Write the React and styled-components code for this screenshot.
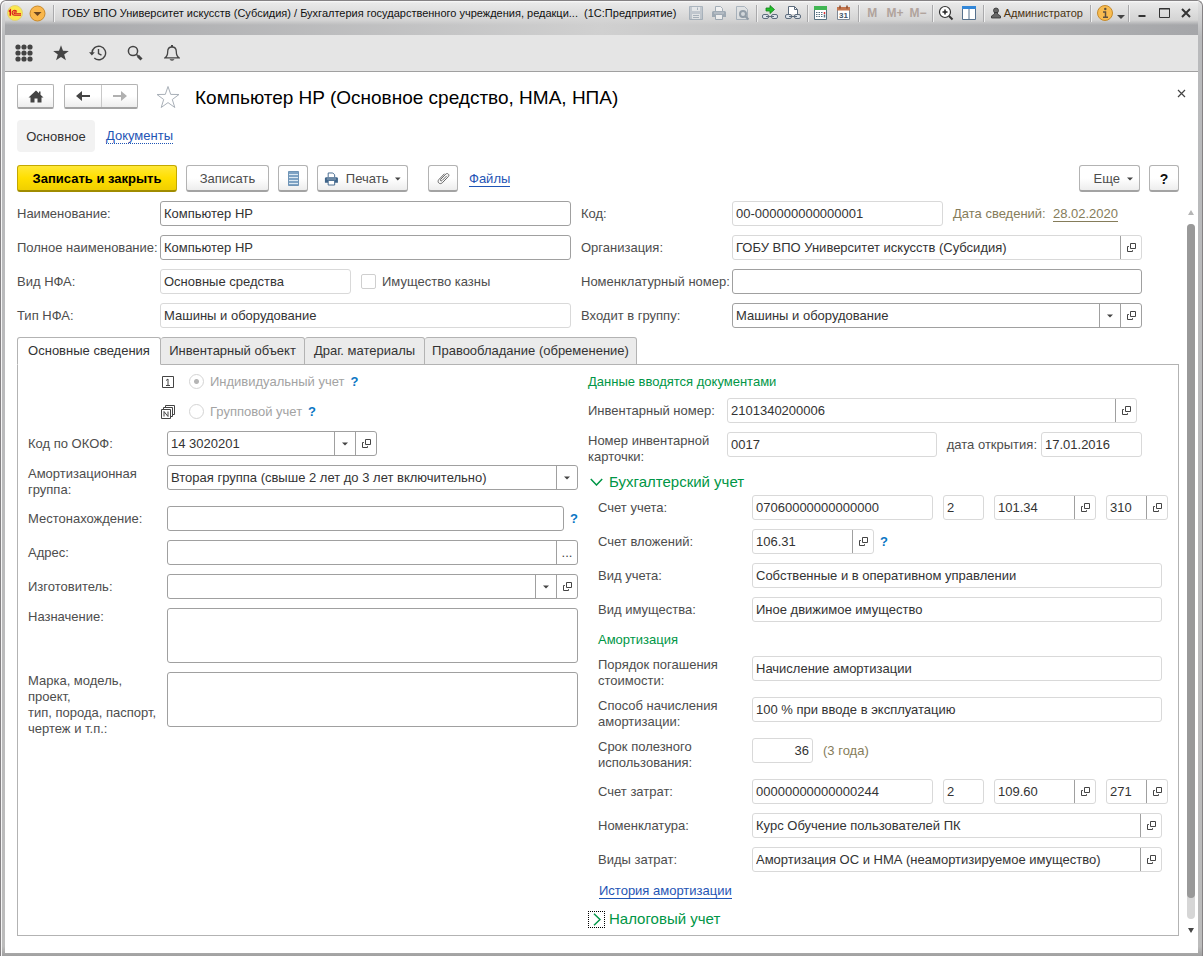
import React from "react";
import styled, { createGlobalStyle, css } from "styled-components";

const colors = {
    text: "#333333",
    label: "#4d4d4d",
    border: "#a0a0a0",
    borderSoft: "#d9d9d9",
    green: "#009646",
    link: "#1f55b5",
    help: "#0a76c4",
    muted: "#857c5a",
}

const GlobalStyle = createGlobalStyle`
*, *::before, *::after { box-sizing: border-box; }
body {
margin: 0;
background: #ffffff;
}
body, input, select, textarea, button {
font-family: "Liberation Sans", Arial, sans-serif;
font-size: 13px;
line-height: 16px;
color: ${colors.text};
}
button {
padding: 0;
border: none;
background: none;
}
svg { display: block; }
`

/* window */

const Window = styled.div`
min-height: 100vh;
display: flex;
flex-direction: column;
padding: 0 4px 3px;
border: solid #858284;
border-width: 1px 1px 0;
border-radius: 6px 6px 0 0;
background: linear-gradient(to bottom, #e2e2e2, #b9babc 36px, #bcbcbc 99%, #a0a0a0 100%);
box-shadow: inset 1px 1px 0 #f4f4f4;
`

const TitleBar = styled.header`
height: 34px;
padding: 0 1px 10px 1px;
display: flex;
align-items: center;
background:
linear-gradient(to bottom, #fafafa, #e9e9e9 2px, #d4d4d4 19px, transparent 24px),
linear-gradient(to right, #a5a6a9, #d0d0d0 50%, #a5a6a9);
`

const WindowTitle = styled.h1`
flex: 1 1 0;
min-width: 0;
margin: 0;
padding-left: 6px;
overflow: hidden;
white-space: pre;
font-size: 11px;
font-weight: normal;
color: #111111;
`

const Separator = styled.span`
flex: none;
width: 1px;
height: 17px;
margin: 0 2px;
background: #a9a9ab;
box-shadow: 1px 0 0 #f0f0f0;
`

const TitleButton = styled.button`
flex: none;
width: ${(p) => p.$width || 23}px;
height: 22px;
display: flex;
align-items: center;
justify-content: center;
gap: 3px;
opacity: ${(p) => (p.disabled ? 0.55 : 1)};
`

const MemoryButton = styled(TitleButton)`
font-size: 12px;
font-weight: bold;
color: #8d7468;
`

const UserButton = styled(TitleButton)`
width: auto;
padding: 0 5px;
font-size: 11px;
color: #4a3412;
white-space: nowrap;
`

const SectionBar = styled.nav`
height: 37px;
display: flex;
align-items: center;
background: #e5e5e5;
border-bottom: 1px solid #a0a0a0;
`

const SectionButton = styled.button`
width: 37px;
height: 36px;
display: flex;
align-items: center;
justify-content: center;
color: #444444;
`

const Page = styled.main`
flex: 1;
padding: 12px 3px 17px 12px;
background: #ffffff;
`

/* page head */

const PageHead = styled.div`
height: 25px;
padding-right: 5px;
display: flex;
align-items: center;
`

const raised = css`
border: 1px solid #b3b3b3;
border-bottom: 2px solid #a3a3a3;
border-radius: 3px;
background: linear-gradient(to bottom, #ffffff 50%, #ededed);
`

const NavGroup = styled.div`
height: 25px;
display: flex;
margin-right: 10px;
${raised}
border-radius: 2px;
`

const NavButton = styled.button`
width: ${(p) => p.$width || 36}px;
display: flex;
align-items: center;
justify-content: center;
color: #444444;
& + & {
border-left: 1px solid #c8c8c8;
}
`

const StarButton = styled.button`
width: 24px;
margin: 0 15px 0 8px;
`

const PageTitle = styled.h2`
flex: 1;
margin: 0;
padding-top: 2px;
font-size: 19px;
line-height: 25px;
font-weight: normal;
color: #000000;
white-space: nowrap;
`

const CloseButton = styled.button`
width: 18px;
height: 18px;
display: flex;
align-items: center;
justify-content: center;
align-self: flex-start;
`

const PageNav = styled.nav`
margin-top: 11px;
display: flex;
align-items: center;
gap: 11px;
`

const CurrentPage = styled.span`
width: 78px;
height: 32px;
line-height: 34px;
text-align: center;
border-radius: 4px;
background: #f2f2f2;
`

const Link = styled.a`
color: ${(p) => p.$color || colors.link};
text-decoration: none;
line-height: 15px;
border-bottom: 1px ${(p) => (p.$dotted ? "dotted" : "solid")} currentColor;
`

const CommandBar = styled.div`
margin-top: 13px;
padding-right: 16px;
height: 27px;
display: flex;
align-items: center;
gap: 9px;
`

const Command = styled.button`
height: 27px;
width: ${(p) => p.$width}px;
padding: 1px ${(p) => (p.$menu ? 6 : 0)}px 0;
display: flex;
align-items: center;
justify-content: ${(p) => (p.$menu ? "flex-end" : "center")};
gap: 7px;
color: #4d4d4d;
${raised}
${(p) => p.$primary && css`
color: #000000;
font-weight: bold;
border-color: #c3a800;
border-bottom-color: #a08c00;
background: linear-gradient(to bottom, #ffe838, #ffdf00 50%, #f0cf00);
`}
`

const HelpCommand = styled(Command)`
color: #111111;
font-weight: bold;
font-size: 14px;
`

const Attachments = styled.div`
display: flex;
align-items: center;
gap: 11px;
margin-left: 11px;
`

const Spacer = styled.span`
flex: 1;
`

/* form */

const FormArea = styled.div`
margin-top: 9px;
display: flex;
gap: 8px;
`

const Form = styled.form`
flex: 1;
min-width: 0;
`

const HeadGrid = styled.div`
display: grid;
grid-template-columns: minmax(0, 554fr) minmax(0, 561fr);
column-gap: 10px;
padding-right: 37px;
`

const Stack = styled.div`
display: flex;
flex-direction: column;
gap: 9px;
padding-left: ${(p) => p.$indent || 0}px;
`

const Row = styled.div`
display: flex;
align-items: flex-start;
gap: 10px;
padding-right: ${(p) => p.$end || 0}px;
`

const Label = styled.label`
flex: none;
width: ${(p) => p.$width}px;
margin-right: -10px;
color: ${colors.label};
white-space: nowrap;
${(p) => p.$top ? css`
padding-top: 1px;
margin-bottom: -1px;
` : css`
line-height: 25px;
`}
`

const Note = styled.span`
line-height: 25px;
white-space: nowrap;
color: ${(p) => p.$color || colors.label};
`

const NoteLabel = styled(Note).attrs({ as: "label" })`
margin-right: -6px;
`

const Box = styled.div`
height: 25px;
min-width: 0;
display: flex;
flex: ${(p) => (p.$width ? `0 1 ${p.$width}px` : "1 1 0")};
border: 1px solid ${(p) => (p.$soft ? colors.borderSoft : colors.border)};
border-radius: 3px;
background: #ffffff;
`

const control = css`
flex: 1;
width: 100%;
min-width: 0;
height: 23px;
padding: 0 3px;
border: none;
outline: none;
background: transparent;
`

const Input = styled.input`
${control}
text-align: ${(p) => p.$align || "left"};
`

const Select = styled.select`
${control}
appearance: none;
margin-right: -21px;
padding-right: 24px;
`

const SideButton = styled.button`
flex: none;
width: 21px;
display: flex;
align-items: center;
justify-content: center;
border-left: 1px solid ${colors.border};
color: #444444;
`

const Arrow = styled(SideButton).attrs({ as: "span" })`
pointer-events: none;
`

const TextArea = styled.textarea`
flex: 1;
min-width: 0;
height: 55px;
padding: 3px;
border: 1px solid ${colors.border};
border-radius: 3px;
resize: none;
outline: none;
`

const CheckLabel = styled.label`
height: 25px;
display: flex;
align-items: center;
gap: 6px;
color: ${colors.label};
white-space: nowrap;
`

const Check = styled.input`
appearance: none;
width: 15px;
height: 15px;
margin: 0;
border: 1px solid #cfcfcf;
border-radius: 2px;
background: #ffffff;
`

const RadioRow = styled.div`
height: 21px;
padding-left: 133px;
display: flex;
align-items: center;
gap: 6px;
`

const RadioLabel = styled.label`
display: flex;
align-items: center;
gap: 6px;
margin-left: 8px;
color: #a3a3a3;
white-space: nowrap;
`

const Radio = styled.input`
appearance: none;
width: 15px;
height: 15px;
margin: 0;
border: 1px solid #d4d4d4;
border-radius: 50%;
&:checked {
background: radial-gradient(circle, #b5b5b5 0 2px, transparent 3px);
}
`

const Help = styled.button`
width: 8px;
line-height: 16px;
font-weight: bold;
color: ${colors.help};
`

const FieldHelp = styled(Help)`
margin-left: -4px;
line-height: 25px;
`

/* tabs */

const Tabs = styled.div`
position: relative;
margin-top: 9px;
display: flex;
`

const Tab = styled.button`
width: ${(p) => p.$width}px;
height: 28px;
text-align: center;
white-space: nowrap;
border: 1px solid #b3b3b3;
border-radius: 3px 3px 0 0;
background: #ebebeb;
& + & {
border-left: none;
}
${(p) => p["aria-selected"] && css`
background: #ffffff;
border-bottom-color: #ffffff;
`}
`

const Panel = styled.section`
margin-top: -1px;
padding: 6px 10px 3px;
display: grid;
grid-template-columns: minmax(0, 55fr) minmax(0, 58fr);
column-gap: 10px;
border: 1px solid #b3b3b3;
`

const Documents = styled.div`
padding-top: 2px;
`

const SubTitle = styled.h3`
margin: 0;
height: 16px;
font-size: 13px;
line-height: 18px;
font-weight: normal;
color: ${colors.green};
`

const GroupTitle = styled.h3`
margin: 0;
height: 31px;
padding-top: 5px;
display: flex;
align-items: center;
gap: 4px;
font-size: 15px;
font-weight: normal;
color: ${colors.green};
`

const Toggle = styled.button`
width: 17px;
height: 17px;
display: flex;
align-items: center;
justify-content: center;
border: 1px ${(p) => (p.$focused ? "dotted #000000" : "solid transparent")};
`

const HistoryRow = styled.div`
height: 20px;
padding: 2px 0 0 1px;
`

const ScrollBar = styled.div`
width: 8px;
display: flex;
flex-direction: column;
align-items: center;
gap: 9px;
padding: 9px 0 3px;
`

const Track = styled.div`
flex: 1;
width: 8px;
border-radius: 4px;
background: #d6d6d6;
`

const Thumb = styled.div`
height: 97%;
border-radius: 4px;
background: #999999;
`

/* icons */

const Svg = ({ size = 16, w, h, children }) => (
    <svg width={w || size} height={h || size} viewBox={`0 0 ${w || size} ${h || size}`} fill="none" aria-hidden="true">
        {children}
    </svg>
)

const Caret = () => <Svg w={6} h={4}><path d="M0 0.5h6L3 3.5z" fill="#444" /></Svg>

const OpenIcon = () => (
    <Svg w={9} h={9}>
        <path d="M3.5 0.5h5v5h-5z M1.9 3.5H0.5v5h5V7.2" stroke="#444" />
    </Svg>
)

const LogoIcon = () => (
    <Svg size={16}>
        <circle cx="8" cy="8" r="7.5" fill="#fbe84c" stroke="#e0cf7a" />
        <path d="M1.8 6.5L3.3 5.2V10.8" stroke="#d8141c" strokeWidth="1.5" />
        <path d="M9.8 6.6A2.5 2.5 0 1 0 7.6 10.3H14M9 7.9A1 1 0 1 0 8 8.7h6" stroke="#d8141c" strokeWidth="1.1" />
    </Svg>
)

const MenuIcon = () => (
    <Svg size={17}>
        <circle cx="8.5" cy="8.5" r="7.5" fill="#f9b74c" stroke="#c98a2a" />
        <path d="M4.5 7h8l-4 4z" fill="#6a4520" />
    </Svg>
)

const SaveIcon = () => (
    <Svg>
        <path d="M1.5 1.5h13v13h-13z" fill="#a9b5c1" stroke="#7d8fa0" />
        <path d="M4 2h8v4H4zM4 9h8v5H4z" fill="#e8ecef" />
        <path d="M9.5 2.5v2.5M5 10.5h6M5 12.5h6" stroke="#7d8fa0" />
    </Svg>
)

const PrintIcon = ({ color = "#6f8294" }) => (
    <Svg>
        <path d="M4.5 6V1.5h5l2 2V6" fill="#fff" stroke={color} />
        <path d="M2 6h12l1 1v5H1V7z" fill={color} />
        <path d="M4.5 9.5h7v5h-7z" fill="#fff" stroke={color} />
        <path d="M3 8h10" stroke="#fff" strokeOpacity="0.5" />
    </Svg>
)

const PreviewIcon = () => (
    <Svg>
        <path d="M2.5 14.5v-13h8l3 3v10z" fill="#dfe3e6" stroke="#7d8fa0" />
        <circle cx="9" cy="9" r="3" fill="#cdd5dc" stroke="#566a7c" strokeWidth="2" />
        <path d="M11 11l3.5 3.5" stroke="#566a7c" strokeWidth="2" />
    </Svg>
)

const chain = (
    <>
        <rect x="0.5" y="9.5" width="6" height="4" rx="1.5" fill="#dde3ea" stroke="#5c6b7c" />
        <rect x="9.5" y="9.5" width="6" height="4" rx="1.5" fill="#dde3ea" stroke="#5c6b7c" />
        <path d="M4 11.5h8" stroke="#5c6b7c" />
    </>
)

const LinkArrowIcon = () => (
    <Svg>
        {chain}
        <path d="M4 3h4V0.5l4.500 4L8 8.500V6H4z" fill="#22c02a" stroke="#12801a" strokeWidth="0.8" />
    </Svg>
)

const LinkPageIcon = () => (
    <Svg>
        <path d="M3.5 9V1.5h6l3 3V9" fill="#fff" stroke="#5c6b7c" />
        <path d="M9.5 1.5v3h3" stroke="#5c6b7c" />
        {chain}
    </Svg>
)

const CalculatorIcon = () => (
    <Svg>
        <path d="M1.5 1.5h12v13h-12z" fill="#fff" stroke="#55707f" />
        <path d="M1 1h13v4H1z" fill="#41b653" />
        <path d="M3 7.5h7M3 9.5h7M3 11.5h7" stroke="#55707f" strokeDasharray="1.5 1" />
        <path d="M11.5 7v2" stroke="#d33" strokeWidth="1.5" />
        <path d="M11.5 9.5v3" stroke="#55707f" strokeWidth="1.5" />
    </Svg>
)

const CalendarIcon = () => (
    <Svg>
        <path d="M1.5 2.5h12v12h-12z" fill="#fff" stroke="#7d8895" />
        <path d="M1 2h13v3.500H1z" fill="#c4764e" />
        <path d="M4 0.5v3M11 0.5v3" stroke="#8a4a2a" strokeWidth="1.5" />
        <text x="7.5" y="12.8" fontSize="8" fontWeight="bold" textAnchor="middle" fill="#3f5468" fontFamily="Liberation Sans">31</text>
    </Svg>
)

const ZoomIcon = () => (
    <Svg>
        <circle cx="7" cy="7" r="5.5" fill="#fff" stroke="#333" strokeWidth="1.2" />
        <path d="M4.5 7h5M7 4.5v5" stroke="#222" strokeWidth="1.5" />
        <path d="M11 11l3.5 3.5" stroke="#333" strokeWidth="2" />
    </Svg>
)

const PanelsIcon = () => (
    <Svg>
        <path d="M1.5 1.5h13v13h-13z" fill="#fff" stroke="#55708c" />
        <path d="M1 1h14v3H1z" fill="#3287d8" />
        <path d="M8 4v10" stroke="#55708c" />
    </Svg>
)

const UserIcon = () => (
    <Svg w={10} h={12}>
        <circle cx="5" cy="3.5" r="2.5" fill="#666" stroke="#333" strokeWidth="0.8" />
        <path d="M0.5 11V9l3-2V5.5h3V7l3 2v2z" fill="#666" stroke="#333" strokeWidth="0.8" />
    </Svg>
)

const InfoIcon = () => (
    <Svg>
        <circle cx="8" cy="8" r="7.5" fill="#f8bc50" stroke="#c58a2c" />
        <path d="M6 7h2.500v5M6 12.300h5" stroke="#5c5040" strokeWidth="1.5" />
        <circle cx="8.3" cy="4" r="1.2" fill="#5c5040" />
    </Svg>
)

const AppsIcon = () => (
    <Svg size={18}>
        {[3, 9, 15].map((y) => [3, 9, 15].map((x) => <circle key={`${x}-${y}`} cx={x} cy={y} r="2.6" fill="#444" />))}
    </Svg>
)

const FavIcon = () => (
    <Svg size={16}>
        <path d="M8 0.300l2 5.500 5.800.2-4.600 3.500 1.700 5.700L8 11.900l-4.900 3.300 1.700-5.700L.2 6l5.800-.2z" fill="#444" />
    </Svg>
)

const HistoryIcon = () => (
    <Svg size={18}>
        <path d="M3 9a6.800 6.800 0 1 1 2.300 5.100" stroke="#444" strokeWidth="1.4" />
        <path d="M0 8.200h5.800L2.900 11.500z" fill="#444" />
        <path d="M9.500 5v4.500l3 1.700" stroke="#444" strokeWidth="1.4" />
    </Svg>
)

const SearchIcon = () => (
    <Svg size={16}>
        <circle cx="6" cy="6" r="4.6" stroke="#444" strokeWidth="1.5" />
        <path d="M9.300 9.300l1.500 1.500" stroke="#444" strokeWidth="1.5" />
        <path d="M10.800 10.800l3.700 3.700" stroke="#444" strokeWidth="3" />
    </Svg>
)

const BellIcon = () => (
    <Svg w={16} h={18}>
        <path d="M1 13.800c2.200-1.300 2.700-3.200 2.700-6.300C3.700 4.800 5.500 3 8 3s4.300 1.800 4.300 4.500c0 3.100.5 5 2.700 6.300z" stroke="#444" strokeWidth="1.3" />
        <path d="M8 1v2" stroke="#444" strokeWidth="2" />
        <path d="M5.500 15.200h5a2.600 2 0 0 1-5 0z" fill="#444" />
    </Svg>
)

const HomeIcon = () => (
    <Svg w={16} h={13}>
        <path d="M8 0.500L0.500 7.500H2.500V12.500H6.500V8.500H9.500V12.500H13.500V7.500H15.500L12.500 4.700V1.500H11V3.300z" fill="#444" />
    </Svg>
)

const BackIcon = () => (
    <Svg w={14} h={10}>
        <path d="M0 5L6 0V4H14V6H6V10z" fill="#444" />
    </Svg>
)

const ForwardIcon = () => (
    <Svg w={14} h={10}>
        <path d="M14 5L8 0V4H0V6H8V10z" fill="#b0b0b0" />
    </Svg>
)

const StarIcon = () => (
    <Svg size={24}>
        <path d="M12 1.500l2.700 7.900 8.300.1-6.700 5 2.500 8L12 17.600l-6.800 4.900 2.500-8-6.700-5 8.300-.1z" stroke="#a9b0b8" />
    </Svg>
)

const ListIcon = () => (
    <Svg w={11} h={15}>
        <path d="M0.500 0.500h10v14h-10z" fill="#7fa3c4" stroke="#6f94b6" />
        <path d="M1 3.500h9M1 6.500h9M1 9.500h9M1 12.500h9" stroke="#dbe8f2" />
    </Svg>
)

const ClipIcon = () => (
    <Svg size={15}>
        <path d="M10.800 4.800L6 9.600c-1 1-2.300-.3-1.300-1.300l5.100-5.200c1.700-1.600 4.200.7 2.500 2.500L6.300 11.800c-2.500 2.300-5.700-.7-3.400-3.300L8.500 2.700" stroke="#666" />
    </Svg>
)

const SingleIcon = () => (
    <Svg size={14}>
        <path d="M1.500 1.500h11v11h-11z M5 5.500l2-1.500v6.500 M5 10.500h4" stroke="#444" />
    </Svg>
)

const ManyIcon = () => (
    <Svg size={14}>
        <path d="M0.500 4.500h9v9h-9z M2.500 4V2.500h9V11.500H10 M4.500 2V0.500h9V9.500H12" stroke="#444" />
        <path d="M3 11.500V6.500L7 11.500V6.500" stroke="#444" />
    </Svg>
)

/* form parts */

const Field = ({ id, value = "", width, soft, align, name, dots, open, type = "text" }) => (
    <Box $width={width} $soft={soft}>
        <Input id={id} type={type} defaultValue={value} readOnly={soft} $align={align} aria-label={name} />
        {dots && <SideButton type="button" aria-label="Выбрать">...</SideButton>}
        {open && <SideButton type="button" aria-label="Открыть"><OpenIcon /></SideButton>}
    </Box>
)

const Combo = ({ id, value = "", width, open }) => (
    <Box $width={width}>
        <Select id={id} defaultValue={value}>
            <option value={value}>{value}</option>
        </Select>
        <Arrow><Caret /></Arrow>
        {open && <SideButton type="button" aria-label="Открыть"><OpenIcon /></SideButton>}
    </Box>
)

const AccountRow = ({ id, label, values }) => (
    <Row>
        <Label htmlFor={id} $width={154}>{label}</Label>
        <Field id={id} soft value={values[0]} />
        <Field soft width={41} value={values[1]} name="КФО" />
        <Field soft width={102} value={values[2]} name="Счет" open />
        <Field soft width={62} value={values[3]} name="КЭК" open />
    </Row>
)

const tabs = [
    { title: "Основные сведения", width: 144 },
    { title: "Инвентарный объект", width: 144 },
    { title: "Драг. материалы", width: 120 },
    { title: "Правообладание (обременение)", width: 212 },
]

const sections = [
    { title: "Меню функций", icon: <AppsIcon /> },
    { title: "Избранное", icon: <FavIcon /> },
    { title: "История", icon: <HistoryIcon /> },
    { title: "Поиск", icon: <SearchIcon /> },
    { title: "Оповещения", icon: <BellIcon /> },
]

function AppTitle() {
    return (
        <TitleBar>
            <TitleButton $width={18} aria-label="1С"><LogoIcon /></TitleButton>
            <TitleButton $width={27} aria-label="Главное меню"><MenuIcon /></TitleButton>
            <Separator />
            <WindowTitle>{"ГОБУ ВПО Университет искусств (Субсидия) / Бухгалтерия государственного учреждения, редакци...  (1С:Предприятие)"}</WindowTitle>
            <TitleButton disabled aria-label="Сохранить"><SaveIcon /></TitleButton>
            <TitleButton disabled aria-label="Печать"><PrintIcon /></TitleButton>
            <TitleButton disabled aria-label="Просмотр"><PreviewIcon /></TitleButton>
            <Separator />
            <TitleButton aria-label="Получить ссылку"><LinkArrowIcon /></TitleButton>
            <TitleButton aria-label="Перейти по ссылке"><LinkPageIcon /></TitleButton>
            <Separator />
            <TitleButton aria-label="Калькулятор"><CalculatorIcon /></TitleButton>
            <TitleButton aria-label="Календарь"><CalendarIcon /></TitleButton>
            <Separator />
            <MemoryButton disabled>M</MemoryButton>
            <MemoryButton disabled>M+</MemoryButton>
            <MemoryButton disabled>M−</MemoryButton>
            <Separator />
            <TitleButton aria-label="Масштаб"><ZoomIcon /></TitleButton>
            <TitleButton aria-label="Панели"><PanelsIcon /></TitleButton>
            <Separator />
            <UserButton><UserIcon />Администратор</UserButton>
            <Separator />
            <TitleButton aria-label="Справка"><InfoIcon /></TitleButton>
            <TitleButton $width={10} aria-label="Еще">
                <Svg w={8} h={12}><path d="M0 8h8l-4 4z" fill="#444" /></Svg>
            </TitleButton>
            <Separator />
            <TitleButton $width={22} aria-label="Свернуть">
                <Svg w={8} h={8}><path d="M0.500 7h7" stroke="#333" strokeWidth="2" /></Svg>
            </TitleButton>
            <TitleButton $width={22} aria-label="Развернуть">
                <Svg w={11} h={10}><path d="M0.500 0.500h10v9h-10z M0 1h11" stroke="#333" /></Svg>
            </TitleButton>
            <TitleButton $width={22} aria-label="Закрыть окно">
                <Svg size={10}><path d="M1 1l8 8M9 1L1 9" stroke="#333" strokeWidth="2" /></Svg>
            </TitleButton>
        </TitleBar>
    )
}

function HeadFields() {
    return (
        <HeadGrid>
            <Stack>
                <Row>
                    <Label htmlFor="name" $width={143}>Наименование:</Label>
                    <Field id="name" value="Компьютер HP" />
                </Row>
                <Row>
                    <Label htmlFor="fullName" $width={143}>Полное наименование:</Label>
                    <Field id="fullName" value="Компьютер HP" />
                </Row>
                <Row>
                    <Label htmlFor="assetKind" $width={143}>Вид НФА:</Label>
                    <Field id="assetKind" soft width={191} value="Основные средства" />
                    <CheckLabel><Check type="checkbox" />Имущество казны</CheckLabel>
                </Row>
                <Row>
                    <Label htmlFor="assetType" $width={143}>Тип НФА:</Label>
                    <Field id="assetType" soft value="Машины и оборудование" />
                </Row>
            </Stack>
            <Stack>
                <Row>
                    <Label htmlFor="code" $width={151}>Код:</Label>
                    <Field id="code" soft width={211} value="00-000000000000001" />
                    <Note $color={colors.muted}>Дата сведений:&nbsp; <Link href="#date" $color={colors.muted}>28.02.2020</Link></Note>
                </Row>
                <Row>
                    <Label htmlFor="company" $width={151}>Организация:</Label>
                    <Field id="company" soft value="ГОБУ ВПО Университет искусств (Субсидия)" open />
                </Row>
                <Row>
                    <Label htmlFor="itemNumber" $width={151}>Номенклатурный номер:</Label>
                    <Field id="itemNumber" />
                </Row>
                <Row>
                    <Label htmlFor="parent" $width={151}>Входит в группу:</Label>
                    <Combo id="parent" value="Машины и оборудование" open />
                </Row>
            </Stack>
        </HeadGrid>
    )
}

function MainInfo() {
    return (
        <Stack>
            <RadioRow>
                <SingleIcon />
                <RadioLabel><Radio type="radio" name="accounting" defaultChecked disabled />Индивидуальный учет</RadioLabel>
                <Help type="button">?</Help>
            </RadioRow>
            <RadioRow>
                <ManyIcon />
                <RadioLabel><Radio type="radio" name="accounting" disabled />Групповой учет</RadioLabel>
                <Help type="button">?</Help>
            </RadioRow>
            <Row>
                <Label htmlFor="okof" $width={139}>Код по ОКОФ:</Label>
                <Combo id="okof" width={210} value="14 3020201" open />
            </Row>
            <Row>
                <Label htmlFor="group" $width={139} $top>Амортизационная<br />группа:</Label>
                <Combo id="group" value="Вторая группа (свыше 2 лет до 3 лет включительно)" />
            </Row>
            <Row>
                <Label htmlFor="location" $width={139}>Местонахождение:</Label>
                <Field id="location" />
                <FieldHelp type="button">?</FieldHelp>
            </Row>
            <Row>
                <Label htmlFor="address" $width={139}>Адрес:</Label>
                <Field id="address" dots />
            </Row>
            <Row>
                <Label htmlFor="maker" $width={139}>Изготовитель:</Label>
                <Combo id="maker" open />
            </Row>
            <Row>
                <Label htmlFor="purpose" $width={139} $top>Назначение:</Label>
                <TextArea id="purpose" />
            </Row>
            <Row>
                <Label htmlFor="model" $width={139} $top>
                    Марка, модель,<br />проект,<br />тип, порода, паспорт,<br />чертеж и т.п.:
                </Label>
                <TextArea id="model" />
            </Row>
        </Stack>
    )
}

function DocumentInfo() {
    return (
        <Documents>
            <Stack>
                <SubTitle>Данные вводятся документами</SubTitle>
                <Row $end={31}>
                    <Label htmlFor="inventory" $width={139}>Инвентарный номер:</Label>
                    <Field id="inventory" soft value="2101340200006" open />
                </Row>
                <Row $end={26}>
                    <Label htmlFor="card" $width={139} $top>Номер инвентарной<br />карточки:</Label>
                    <Field id="card" soft value="0017" />
                    <NoteLabel htmlFor="cardDate">дата открытия:</NoteLabel>
                    <Field id="cardDate" soft width={101} value="17.01.2016" />
                </Row>
            </Stack>
            <GroupTitle>
                <Toggle type="button" aria-label="Свернуть группу">
                    <Svg w={13} h={8}><path d="M0.800 1l5.700 6L12.200 1" stroke={colors.green} strokeWidth="1.5" /></Svg>
                </Toggle>
                Бухгалтерский учет
            </GroupTitle>
            <Stack $indent={10}>
                <AccountRow id="account" label="Счет учета:" values={["07060000000000000", "2", "101.34", "310"]} />
                <Row>
                    <Label htmlFor="invest" $width={154}>Счет вложений:</Label>
                    <Field id="invest" soft width={122} value="106.31" open />
                    <FieldHelp type="button">?</FieldHelp>
                </Row>
                <Row $end={6}>
                    <Label htmlFor="kind" $width={154}>Вид учета:</Label>
                    <Field id="kind" soft value="Собственные и в оперативном управлении" />
                </Row>
                <Row $end={6}>
                    <Label htmlFor="property" $width={154}>Вид имущества:</Label>
                    <Field id="property" soft value="Иное движимое имущество" />
                </Row>
                <SubTitle>Амортизация</SubTitle>
                <Row $end={6}>
                    <Label htmlFor="repay" $width={154} $top>Порядок погашения<br />стоимости:</Label>
                    <Field id="repay" soft value="Начисление амортизации" />
                </Row>
                <Row $end={6}>
                    <Label htmlFor="method" $width={154} $top>Способ начисления<br />амортизации:</Label>
                    <Field id="method" soft value="100 % при вводе в эксплуатацию" />
                </Row>
                <Row>
                    <Label htmlFor="term" $width={154} $top>Срок полезного<br />использования:</Label>
                    <Field id="term" soft width={61} align="right" value="36" />
                    <Note $color={colors.muted}>(3 года)</Note>
                </Row>
                <AccountRow id="cost" label="Счет затрат:" values={["00000000000000244", "2", "109.60", "271"]} />
                <Row $end={6}>
                    <Label htmlFor="item" $width={154}>Номенклатура:</Label>
                    <Field id="item" soft value="Курс Обучение пользователей ПК" open />
                </Row>
                <Row $end={6}>
                    <Label htmlFor="costKind" $width={154}>Виды затрат:</Label>
                    <Field id="costKind" soft value="Амортизация ОС и НМА (неамортизируемое имущество)" open />
                </Row>
                <HistoryRow><Link href="#history">История амортизации</Link></HistoryRow>
            </Stack>
            <GroupTitle>
                <Toggle type="button" $focused aria-label="Развернуть группу">
                    <Svg w={8} h={13}><path d="M1 0.800l6 5.700L1 12.200" stroke={colors.green} strokeWidth="1.5" /></Svg>
                </Toggle>
                Налоговый учет
            </GroupTitle>
        </Documents>
    )
}

export default function App() {
    return (
        <>
            <GlobalStyle />
            <Window>
                <AppTitle />
                <SectionBar>
                    {sections.map((item) => (
                        <SectionButton key={item.title} aria-label={item.title}>{item.icon}</SectionButton>
                    ))}
                </SectionBar>
                <Page>
                    <PageHead>
                        <NavGroup>
                            <NavButton $width={35} aria-label="Домой"><HomeIcon /></NavButton>
                        </NavGroup>
                        <NavGroup>
                            <NavButton aria-label="Назад"><BackIcon /></NavButton>
                            <NavButton aria-label="Вперед"><ForwardIcon /></NavButton>
                        </NavGroup>
                        <StarButton aria-label="В избранное"><StarIcon /></StarButton>
                        <PageTitle>Компьютер HP (Основное средство, НМА, НПА)</PageTitle>
                        <CloseButton aria-label="Закрыть">
                            <Svg size={9}><path d="M1 1l7 7M8 1L1 8" stroke="#444" strokeWidth="1.2" /></Svg>
                        </CloseButton>
                    </PageHead>
                    <PageNav>
                        <CurrentPage>Основное</CurrentPage>
                        <Link href="#documents" $dotted>Документы</Link>
                    </PageNav>
                    <CommandBar>
                        <Command $width={160} $primary>Записать и закрыть</Command>
                        <Command $width={83}>Записать</Command>
                        <Command $width={30} aria-label="Список"><ListIcon /></Command>
                        <Command $width={91} $menu><PrintIcon color="#3f658a" />Печать<Caret /></Command>
                        <Attachments>
                            <Command $width={30} aria-label="Прикрепить"><ClipIcon /></Command>
                            <Link href="#files">Файлы</Link>
                        </Attachments>
                        <Spacer />
                        <Command $width={61} $menu>Еще<Caret /></Command>
                        <HelpCommand $width={30}>?</HelpCommand>
                    </CommandBar>
                    <FormArea>
                        <Form>
                            <HeadFields />
                            <Tabs role="tablist">
                                {tabs.map((tab, index) => (
                                    <Tab key={tab.title} type="button" role="tab" aria-selected={index === 0} $width={tab.width}>
                                        {tab.title}
                                    </Tab>
                                ))}
                            </Tabs>
                            <Panel>
                                <MainInfo />
                                <DocumentInfo />
                            </Panel>
                        </Form>
                        <ScrollBar>
                            <Svg w={6} h={5}><path d="M0 5h6L3 0z" fill="#b5b5b5" /></Svg>
                            <Track><Thumb /></Track>
                            <Svg w={6} h={5}><path d="M0 0h6L3 5z" fill="#444" /></Svg>
                        </ScrollBar>
                    </FormArea>
                </Page>
            </Window>
        </>
    )
}
